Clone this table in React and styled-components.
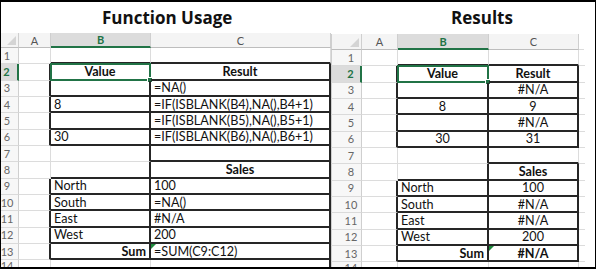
import React from 'react'
import styled, { createGlobalStyle } from 'styled-components'

const GRID = '#dcdcdc'
const INK = '#262626'
const GREEN = '#217346'

const GlobalStyle = createGlobalStyle`
  html, body { margin: 0; padding: 0; background: #fff; }
  body { font-family: Lato, "Liberation Sans", sans-serif; }
`

const Frame = styled.div`
  box-sizing: border-box;
  width: 596px;
  height: 269px;
  border-top: 2px solid #000;
  border-left: 1px solid #000;
  border-right: 1px solid #000;
  border-bottom: 2px solid #000;
  display: flex;
  overflow: hidden;
  background: #fff;
`

const Panel = styled.div`
  flex: ${p => (p.$width ? 'none' : '1')};
  width: ${p => (p.$width ? `${p.$width}px` : 'auto')};
  display: flex;
  flex-direction: column;
  min-height: 0;
`

const Title = styled.div`
  box-sizing: border-box;
  height: ${p => p.$h}px;
  padding: 7px 0 0 ${p => p.$pad}px;
  font-family: "Open Sans", "Noto Sans", sans-serif;
  font-weight: 700;
  font-size: 17px;
  line-height: 17px;
  color: #111;
  white-space: nowrap;
`

const Grid = styled.div`
  flex: 1;
  min-height: 0;
  display: grid;
  grid-template-columns: ${p => p.$cols};
  grid-template-rows: ${p => p.$headH}px repeat(13, 16.33px) 1fr;
  font-size: 12.6px;
  color: #111;
`

const Corner = styled.div`
  position: relative;
  box-sizing: border-box;
  background: #f4f4f4;
  border-right: 1px solid #cfcfcf;
  border-bottom: 1px solid #bdbdbd;
  border-left: ${p => (p.$lead ? '1px solid #cfcfcf' : 'none')};

  &::after {
    content: '';
    position: absolute;
    right: 2px;
    bottom: 2px;
    width: 0;
    height: 0;
    border-left: 9px solid transparent;
    border-bottom: 9px solid #d4d4d4;
  }
`

const ColHead = styled.div`
  box-sizing: border-box;
  display: flex;
  align-items: center;
  justify-content: center;
  background: ${p => (p.$blank ? '#fff' : p.$active ? '#dcdcdc' : '#f4f4f4')};
  border-right: ${p => (p.$blank ? 'none' : '1px solid #cfcfcf')};
  border-bottom: ${p => (p.$active ? `2px solid ${GREEN}` : p.$blank ? `1px solid ${GRID}` : '1px solid #bdbdbd')};
  color: ${p => (p.$active ? GREEN : '#555')};
  font-weight: ${p => (p.$active ? 700 : 400)};
  font-size: 11px;
`

const RowHead = styled.div`
  box-sizing: border-box;
  display: flex;
  align-items: ${p => (p.$last ? 'flex-start' : 'center')};
  justify-content: center;
  padding: ${p => (p.$lead ? '0 0 0 9px' : '0 5px 0 0')};
  background: ${p => (p.$active ? '#dcdcdc' : '#f7f7f7')};
  border-left: ${p => (p.$lead ? '1px solid #cfcfcf' : 'none')};
  border-right: ${p => (p.$active ? `2px solid ${GREEN}` : '1px solid #cfcfcf')};
  border-bottom: ${p => (p.$last ? 'none' : '1px solid #dadada')};
  color: ${p => (p.$active ? GREEN : '#666')};
  font-weight: ${p => (p.$active ? 700 : 400)};
  font-size: 11px;
  line-height: 12px;
  overflow: hidden;
`

const Cell = styled.div`
  position: relative;
  box-sizing: border-box;
  display: flex;
  align-items: center;
  justify-content: ${p => ({ center: 'center', right: 'flex-end' }[p.$align] || 'flex-start')};
  padding: 0 3px;
  border-right: ${p => (p.$noRight ? 'none' : p.$r ? `2px solid ${INK}` : `1px solid ${GRID}`)};
  border-bottom: ${p => (p.$last ? 'none' : p.$b ? `2px solid ${INK}` : `1px solid ${GRID}`)};
  font-weight: ${p => (p.$bold ? 700 : 400)};
  white-space: nowrap;
`

const Selection = styled.span`
  position: absolute;
  top: -1px;
  left: -1px;
  right: -2px;
  bottom: -2px;
  border: 2px solid ${GREEN};
  pointer-events: none;

  &::after {
    content: '';
    position: absolute;
    right: -4px;
    bottom: -4px;
    width: 4px;
    height: 4px;
    background: ${GREEN};
    border: 1px solid #fff;
  }
`

const ErrorMark = styled.span`
  position: absolute;
  top: 0;
  left: 0;
  width: 0;
  height: 0;
  border-top: 5px solid #1e8a3c;
  border-right: 5px solid transparent;
`

const darkRight = (c, r, sep) => {
  if (c === 'A') return (r >= 2 && r <= 6) || (r >= 9 && r <= 13)
  if (c === 'B') return r >= 2 && r <= 13
  if (c === 'C') return sep ? r >= 2 : (r >= 2 && r <= 6) || (r >= 8 && r <= 13)
  return false
}

const darkBottom = (c, r) => {
  if (c === 'B') return (r >= 1 && r <= 6) || (r >= 8 && r <= 13)
  if (c === 'C') return r >= 1 && r <= 13
  return false
}

const leftCells = {
  2: { B: { t: 'Value', a: 'center', bold: true, sel: true }, C: { t: 'Result', a: 'center', bold: true } },
  3: { C: { t: '=NA()' } },
  4: { B: { t: '8' }, C: { t: '=IF(ISBLANK(B4),NA(),B4+1)' } },
  5: { C: { t: '=IF(ISBLANK(B5),NA(),B5+1)' } },
  6: { B: { t: '30' }, C: { t: '=IF(ISBLANK(B6),NA(),B6+1)' } },
  8: { C: { t: 'Sales', a: 'center', bold: true } },
  9: { B: { t: 'North' }, C: { t: '100' } },
  10: { B: { t: 'South' }, C: { t: '=NA()' } },
  11: { B: { t: 'East' }, C: { t: '#N/A' } },
  12: { B: { t: 'West' }, C: { t: '200' } },
  13: { B: { t: 'Sum', a: 'right', bold: true }, C: { t: '=SUM(C9:C12)', err: true } },
}

const rightCells = {
  2: { B: { t: 'Value', a: 'center', bold: true, sel: true }, C: { t: 'Result', a: 'center', bold: true } },
  3: { C: { t: '#N/A', a: 'center' } },
  4: { B: { t: '8', a: 'center' }, C: { t: '9', a: 'center' } },
  5: { C: { t: '#N/A', a: 'center' } },
  6: { B: { t: '30', a: 'center' }, C: { t: '31', a: 'center' } },
  8: { C: { t: 'Sales', a: 'center', bold: true } },
  9: { B: { t: 'North' }, C: { t: '100', a: 'center' } },
  10: { B: { t: 'South' }, C: { t: '#N/A', a: 'center' } },
  11: { B: { t: 'East' }, C: { t: '#N/A', a: 'center' } },
  12: { B: { t: 'West' }, C: { t: '200', a: 'center' } },
  13: { B: { t: 'Sum', a: 'right', bold: true }, C: { t: '#N/A', a: 'center', bold: true, err: true } },
}

const ROWS = Array.from({ length: 14 }, (_, i) => i + 1)

const Sheet = ({ cols, widths, headH, cells, sep, lead }) => (
  <Grid $cols={widths} $headH={headH}>
    <Corner $lead={lead} />
    {cols.map(c => (
      <ColHead key={c} $active={c === 'B'} $blank={c === 'D'}>
        {c === 'D' ? '' : c}
      </ColHead>
    ))}
    {ROWS.map(r => (
      <React.Fragment key={r}>
        <RowHead $active={r === 2} $lead={lead} $last={r === 14}>{r}</RowHead>
        {cols.map(c => {
          const cell = (cells[r] && cells[r][c]) || {}
          return (
            <Cell
              key={c}
              $r={darkRight(c, r, sep)}
              $b={darkBottom(c, r)}
              $noRight={c === 'D'}
              $last={r === 14}
              $align={cell.a}
              $bold={cell.bold}
            >
              {cell.err && <ErrorMark />}
              {cell.t}
              {cell.sel && <Selection />}
            </Cell>
          )
        })}
      </React.Fragment>
    ))}
  </Grid>
)

export default function App() {
  return (
    <>
      <GlobalStyle />
      <Frame>
        <Panel $width={330}>
          <Title $h={31} $pad={101}>Function Usage</Title>
          <Sheet
            cols={['A', 'B', 'C']}
            widths="18px 32px 100px 180px"
            headH={15}
            cells={leftCells}
            sep
          />
        </Panel>
        <Panel>
          <Title $h={32} $pad={120}>Results</Title>
          <Sheet
            cols={['A', 'B', 'C', 'D']}
            widths="31px 36px 91px 90px 5px"
            headH={16}
            cells={rightCells}
            lead
          />
        </Panel>
      </Frame>
    </>
  )
}
